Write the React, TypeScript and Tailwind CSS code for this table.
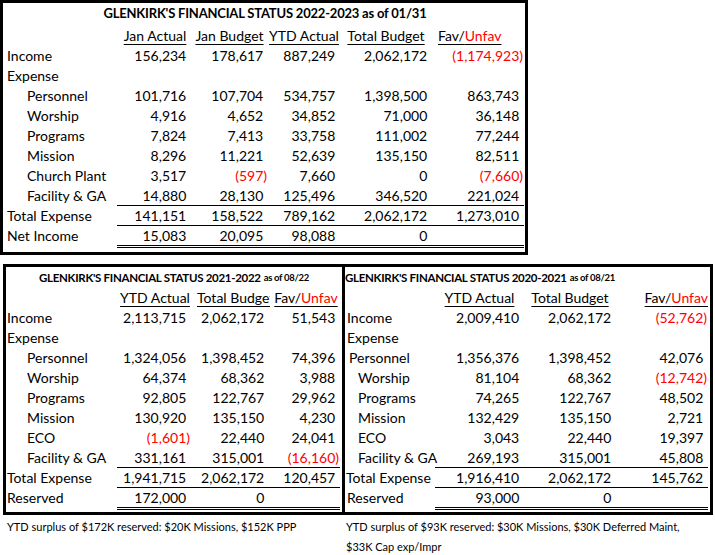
import React from "react"

type Row = {
    label: string
    indent?: string
    vals: string[]
    lineTop?: boolean
    double?: boolean
}

// number cell: negatives in red parens, positives get an invisible ")" so digits line up
function Num({ v }: { v: string }) {
    if (!v) return null
    if (v.startsWith("(")) return <span className="text-[#ff0000]">{v}</span>
    return (
        <span>
            {v}
            <span className="invisible">)</span>
        </span>
    )
}

function FavUnfav() {
    return (
        <span className="underline decoration-1 underline-offset-[3px]">
            Fav/<span className="text-[#ff0000]">Unfav</span>
        </span>
    )
}

const topRows: Row[] = [
    { label: "Income", vals: ["156,234", "178,617", "887,249", "2,062,172", "(1,174,923)"] },
    { label: "Expense", vals: ["", "", "", "", ""] },
    { label: "Personnel", indent: "pl-[24px]", vals: ["101,716", "107,704", "534,757", "1,398,500", "863,743"] },
    { label: "Worship", indent: "pl-[24px]", vals: ["4,916", "4,652", "34,852", "71,000", "36,148"] },
    { label: "Programs", indent: "pl-[24px]", vals: ["7,824", "7,413", "33,758", "111,002", "77,244"] },
    { label: "Mission", indent: "pl-[24px]", vals: ["8,296", "11,221", "52,639", "135,150", "82,511"] },
    { label: "Church Plant", indent: "pl-[24px]", vals: ["3,517", "(597)", "7,660", "0", "(7,660)"] },
    { label: "Facility & GA", indent: "pl-[24px]", vals: ["14,880", "28,130", "125,496", "346,520", "221,024"] },
    { label: "Total Expense", vals: ["141,151", "158,522", "789,162", "2,062,172", "1,273,010"], lineTop: true },
    { label: "Net Income", vals: ["15,083", "20,095", "98,088", "0", ""], lineTop: true, double: true },
]

const leftRows: Row[] = [
    { label: "Income", vals: ["2,113,715", "2,062,172", "51,543"] },
    { label: "Expense", vals: ["", "", ""] },
    { label: "Personnel", indent: "pl-[21px]", vals: ["1,324,056", "1,398,452", "74,396"] },
    { label: "Worship", indent: "pl-[21px]", vals: ["64,374", "68,362", "3,988"] },
    { label: "Programs", indent: "pl-[21px]", vals: ["92,805", "122,767", "29,962"] },
    { label: "Mission", indent: "pl-[21px]", vals: ["130,920", "135,150", "4,230"] },
    { label: "ECO", indent: "pl-[21px]", vals: ["(1,601)", "22,440", "24,041"] },
    { label: "Facility & GA", indent: "pl-[21px]", vals: ["331,161", "315,001", "(16,160)"] },
    { label: "Total Expense", vals: ["1,941,715", "2,062,172", "120,457"], lineTop: true },
    { label: "Reserved", vals: ["172,000", "0", ""], lineTop: true, double: true },
]

const rightRows: Row[] = [
    { label: "Income", indent: "pl-[2px]", vals: ["2,009,410", "2,062,172", "(52,762)"] },
    { label: "Expense", indent: "pl-[2px]", vals: ["", "", ""] },
    { label: "Personnel", indent: "pl-[4px]", vals: ["1,356,376", "1,398,452", "42,076"] },
    { label: "Worship", indent: "pl-[13px]", vals: ["81,104", "68,362", "(12,742)"] },
    { label: "Programs", indent: "pl-[13px]", vals: ["74,265", "122,767", "48,502"] },
    { label: "Mission", indent: "pl-[13px]", vals: ["132,429", "135,150", "2,721"] },
    { label: "ECO", indent: "pl-[13px]", vals: ["3,043", "22,440", "19,397"] },
    { label: "Facility & GA", indent: "pl-[13px]", vals: ["269,193", "315,001", "45,808"] },
    { label: "Total Expense", indent: "pl-[1px]", vals: ["1,916,410", "2,062,172", "145,762"], lineTop: true },
    { label: "Reserved", indent: "pl-[2px]", vals: ["93,000", "0", ""], lineTop: true, double: true },
]

function DataRow({ row, cols, labelPad }: { row: Row; cols: string; labelPad: string }) {
    const h = row.double ? "h-[23px]" : "h-[20px]"
    return (
        <div className={`grid ${cols}`}>
            <div className={`${h} ${row.indent ?? labelPad} flex items-center whitespace-nowrap ${row.double ? "pb-[3px]" : ""}`}>
                {row.label}
            </div>
            {row.vals.map((v, i) => (
                <div
                    key={i}
                    className={`${h} flex items-center justify-end pr-[1px] whitespace-nowrap
                        ${row.lineTop ? "border-t border-black" : ""}
                        ${row.double ? "border-b-[3px] border-double border-black" : ""}`}
                >
                    <Num v={v} />
                </div>
            ))}
        </div>
    )
}

export default function App() {
    return (
        <div className="w-[715px] h-[555px] bg-white text-black font-['Lato',sans-serif] text-[14px] overflow-hidden">
            {/* 2022-2023 */}
            <div className="w-[528px] h-[255px] border-[3px] border-black">
                <div className="h-[22px] flex items-center justify-center font-bold text-[13px] tracking-[-0.2px] pl-[2px]">
                    GLENKIRK'S FINANCIAL STATUS 2022-2023 as of 01/31
                </div>
                <div className="grid grid-cols-[114px_74px_77px_72px_92px_93px] h-[20px] items-center">
                    <div />
                    <div className="text-center pl-[2px]"><span className="underline decoration-1 underline-offset-[3px]">Jan Actual</span></div>
                    <div className="text-center"><span className="underline decoration-1 underline-offset-[3px]">Jan Budget</span></div>
                    <div className="text-center"><span className="underline decoration-1 underline-offset-[3px]">YTD Actual</span></div>
                    <div className="text-center"><span className="underline decoration-1 underline-offset-[3px]">Total Budget</span></div>
                    <div className="text-left pl-[6px]"><FavUnfav /></div>
                </div>
                {topRows.map((r) => (
                    <DataRow key={r.label} row={r} cols="grid-cols-[114px_74px_77px_72px_92px_92px]" labelPad="pl-[4px]" />
                ))}
            </div>

            <div className="mt-[9px] ml-[3px] w-[710px] h-[251px] border-[3px] border-black flex">
                {/* 2021-2022 */}
                <div className="w-[339px] border-r-[3px] border-black">
                    <div className="h-[20px] flex items-center justify-center font-bold text-[11.5px] tracking-[-0.3px] pt-[2px]">
                        GLENKIRK'S FINANCIAL STATUS 2021-2022 <span className="text-[9.5px] ml-[3px]">as of 08/22</span>
                    </div>
                    <div className="grid grid-cols-[111px_74px_79px_72px] h-[20px] items-center">
                        <div />
                        <div className="text-center pl-[2px]"><span className="underline decoration-1 underline-offset-[3px]">YTD Actual</span></div>
                        <div className="pl-[6px] whitespace-nowrap overflow-hidden"><span className="underline decoration-1 underline-offset-[3px]">Total Budget</span></div>
                        <div className="text-center"><FavUnfav /></div>
                    </div>
                    {leftRows.map((r) => (
                        <DataRow key={r.label} row={r} cols="grid-cols-[111px_74px_78px_71px]" labelPad="pl-[1px]" />
                    ))}
                </div>

                {/* 2020-2021 */}
                <div className="w-[365px]">
                    <div className="h-[20px] flex items-center font-bold text-[11.5px] tracking-[-0.3px] pt-[2px] whitespace-nowrap">
                        GLENKIRK'S FINANCIAL STATUS 2020-2021 <span className="text-[9.5px] ml-[3px]">as of 08/21</span>
                    </div>
                    <div className="grid grid-cols-[90px_89px_92px_94px] h-[20px] items-center">
                        <div />
                        <div className="text-center"><span className="underline decoration-1 underline-offset-[3px]">YTD Actual</span></div>
                        <div className="text-center"><span className="underline decoration-1 underline-offset-[3px]">Total Budget</span></div>
                        <div className="text-right pr-[2px]"><FavUnfav /></div>
                    </div>
                    {rightRows.map((r) => (
                        <DataRow key={r.label} row={r} cols="grid-cols-[90px_89px_92px_92px]" labelPad="pl-[2px]" />
                    ))}
                </div>
            </div>

            <div className="flex text-[11px] mt-[2px]">
                <div className="w-[343px] pl-[7px] h-[20px] leading-[20px] whitespace-nowrap">
                    YTD surplus of $172K reserved: $20K Missions, $152K PPP
                </div>
                <div className="pl-[3px]">
                    <div className="h-[20px] leading-[20px] whitespace-nowrap">
                        YTD surplus of $93K reserved: $30K Missions, $30K Deferred Maint,
                    </div>
                    <div className="h-[20px] leading-[20px]">$33K Cap exp/Impr</div>
                </div>
            </div>
        </div>
    )
}
